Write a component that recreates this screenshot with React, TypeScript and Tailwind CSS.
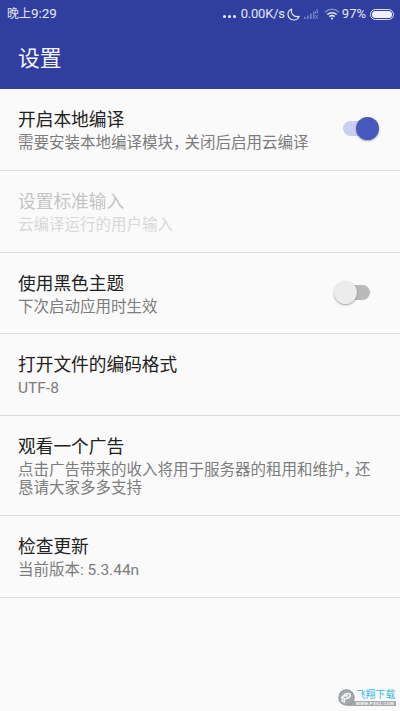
import React from 'react';
import clsx from 'clsx';

interface Setting {
  title: string;
  summary: string;
  disabled?: boolean;
  checked?: boolean;
}

const SETTINGS: Setting[] = [
  { title: '开启本地编译', summary: '需要安装本地编译模块，关闭后启用云编译', checked: true },
  { title: '设置标准输入', summary: '云编译运行的用户输入', disabled: true },
  { title: '使用黑色主题', summary: '下次启动应用时生效', checked: false },
  { title: '打开文件的编码格式', summary: 'UTF-8' },
  { title: '观看一个广告', summary: '点击广告带来的收入将用于服务器的租用和维护，还恳请大家多多支持' },
  { title: '检查更新', summary: '当前版本: 5.3.44n' },
];

const MoonIcon = () => (
  <svg className="ml-[2px] h-[13px] w-[13px]" viewBox="0 0 13 13" fill="none" stroke="#e4e8fb" strokeWidth="1.2" strokeLinejoin="round">
    <path d="M4.6 1C2.2 1.9 1 4 1 6.3C1 9.6 3.5 12 6.7 12C9.2 12 11.3 10.7 12.1 8.4C8 9.6 3.3 6.5 4.6 1Z" />
  </svg>
);

const SignalIcon = () => (
  <svg className="ml-[4px] h-[12px] w-[15px]" viewBox="0 0 15 12" fill="#7480c5">
    <path d="M0 8.8h1.7V11H0zM3 7.5h1.7V11H3zM6 5.5h1.7V11H6zM9 3.5h1.5V11H9zM12.6 1h1.3v4.5h-1.3zM11 3h1v2.5h-1z" />
    <path d="M11.3 7l2.7 4M14 7l-2.7 4" stroke="#7480c5" strokeWidth="1" />
  </svg>
);

const WifiIcon = () => (
  <svg className="ml-[5px] h-[12px] w-[16px]" viewBox="0 0 16 12" fill="none" strokeWidth="1.5">
    <path d="M1 4.2C5 .4 11 .4 15 4.2" stroke="#7f8acb" />
    <path d="M3.3 6.5C6 4 10 4 12.7 6.5" stroke="#dfe4fa" />
    <path d="M5.4 8.6C7 7.2 9 7.2 10.6 8.6" stroke="#f0f2ff" />
    <circle cx="8" cy="10.5" r="1.1" fill="#f0f2ff" />
  </svg>
);

const StatusBar = () => (
  <div className="flex h-7 items-center pl-[7px] pr-[6px] text-[13px] leading-7 text-[#e4e8fb]">
    <span className="flex items-center">
      <span className="text-[12px]">晚上</span>
      <span className="text-[13.4px]">9:29</span>
    </span>
    <div className="ml-auto flex items-center">
      <span className="mr-[5px] mt-[5px] flex gap-[2px]">
        <i className="h-[3px] w-[3px] rounded-full bg-[#f0f2ff]" />
        <i className="h-[3px] w-[3px] rounded-full bg-[#f0f2ff]" />
        <i className="h-[3px] w-[3px] rounded-full bg-[#f0f2ff]" />
      </span>
      <span className="tracking-[-0.2px]">0.00K/s</span>
      <MoonIcon />
      <SignalIcon />
      <WifiIcon />
      <span className="ml-[2px] mr-px">97%</span>
      <span className="ml-[3px] flex h-[11px] w-[24px] rounded-full border border-[#dfe4fa] p-[1px]">
        <i className="flex-1 rounded-full bg-[#f0f2ff]" />
      </span>
    </div>
  </div>
);

const Toggle = ({ checked }: { checked: boolean }) => (
  <div className={clsx('relative mr-[30px] mt-[32px] h-[15px] w-[27px] shrink-0 rounded-full', checked ? 'bg-[#c9d0ef]' : 'bg-[#b9b9b9]')}>
    <div
      className={clsx(
        'absolute -top-[4px] h-[23px] w-[23px] rounded-full shadow-[0_1px_2px_rgba(0,0,0,0.35)]',
        checked ? 'left-[13px] bg-[#4759bd]' : '-left-[9px] bg-[#ececec]',
      )}
    />
  </div>
);

// The full-width comma is set tighter than the other characters
const Summary = ({ text }: { text: string }) => {
  const [head, ...rest] = text.split('，');
  return (
    <>
      {head}
      {rest.map((part) => (
        <React.Fragment key={part}>
          <span className="mr-[3.8px] [font-feature-settings:'halt']">，</span>
          {part}
        </React.Fragment>
      ))}
    </>
  );
};

const SettingRow = ({ title, summary, disabled, checked }: Setting) => (
  <div className="flex border-b border-[#dcdcdc]">
    <div className="min-w-0 flex-1 pb-[17.8px] pl-[18px] pt-[19px]">
      <div className={clsx('text-[17.7px] leading-6', disabled ? 'text-[#c4c4c4]' : 'text-[#212121]')}>{title}</div>
      <div
        className={clsx(
          'mt-[2px] w-[358px] text-[15.5px] leading-[18px]',
          disabled ? 'text-[#d8d8d8]' : 'text-[#7c7c7c]',
        )}
      >
        <Summary text={summary} />
      </div>
    </div>
    {checked !== undefined && <Toggle checked={checked} />}
  </div>
);

// Site badge in the bottom right corner
const Watermark = () => (
  <div className="absolute bottom-[5px] right-[4px] flex h-[17px] w-[58px] items-center">
    <div className="ml-[18px] flex h-full w-[40px] flex-col">
      <span className="h-[12px] whitespace-nowrap text-[9.8px] leading-[11px] text-[#35b9dc]">飞翔下载</span>
      <span className="-ml-[8px] h-[5px] overflow-hidden whitespace-nowrap bg-[#a6aaad] pl-[8px] font-['Liberation_Sans'] text-[4px] font-bold leading-[5px] tracking-[0.4px] text-white">
        WWW.PXXZ.COM
      </span>
    </div>
    <svg className="absolute left-0 top-0 h-[17px] w-[17px]" viewBox="0 0 17 17">
      <circle cx="8.5" cy="8.5" r="7.7" fill="#a4a8ab" stroke="#989ca0" strokeWidth="1.2" />
      <path d="M4 13C5 9 5 5 9 4.5C14 4 13 9 8 9.5M3 9C5 6 8 7 10 6.5M7 9L6 14" fill="none" stroke="#f4f4f4" strokeWidth="1.6" />
    </svg>
  </div>
);

export default function App() {
  return (
    <div className="relative h-[711px] w-[400px] overflow-hidden bg-[#fafafa] font-[Roboto,'Noto_Sans_CJK_SC',sans-serif]">
      <header className="h-[89px] bg-[#303f9f]">
        <StatusBar />
        <h1 className="pl-[18px] pt-[15px] text-[21.8px] leading-[32px] text-[#f3f5ff]">设置</h1>
      </header>
      <main>
        {SETTINGS.map((item) => (
          <SettingRow key={item.title} {...item} />
        ))}
      </main>
      <Watermark />
    </div>
  );
}
